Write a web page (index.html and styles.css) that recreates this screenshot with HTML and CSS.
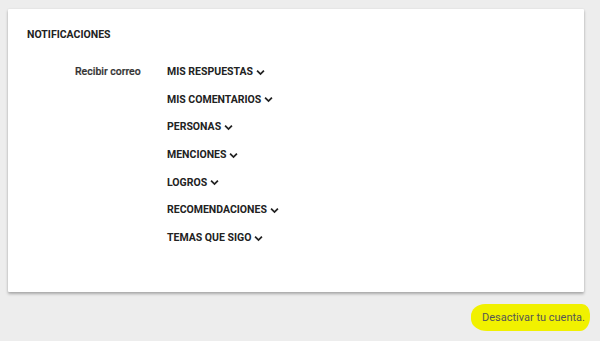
FILE: index.html
```html
<!DOCTYPE html>
<html lang="es">
<head>
<meta charset="utf-8">
<link rel="stylesheet" href="styles.css">
</head>
<body>
<div class="card">
  <h2 class="title">NOTIFICACIONES</h2>
  <div class="row">
    <div class="label">Recibir correo</div>
    <ul class="menu">
      <li>MIS RESPUESTAS <svg class="chev" viewBox="0 0 10 7"><polyline points="1.2,1.5 5,5.2 8.8,1.5"/></svg></li>
      <li>MIS COMENTARIOS <svg class="chev" viewBox="0 0 10 7"><polyline points="1.2,1.5 5,5.2 8.8,1.5"/></svg></li>
      <li>PERSONAS <svg class="chev" viewBox="0 0 10 7"><polyline points="1.2,1.5 5,5.2 8.8,1.5"/></svg></li>
      <li>MENCIONES <svg class="chev" viewBox="0 0 10 7"><polyline points="1.2,1.5 5,5.2 8.8,1.5"/></svg></li>
      <li>LOGROS <svg class="chev" viewBox="0 0 10 7"><polyline points="1.2,1.5 5,5.2 8.8,1.5"/></svg></li>
      <li>RECOMENDACIONES <svg class="chev" viewBox="0 0 10 7"><polyline points="1.2,1.5 5,5.2 8.8,1.5"/></svg></li>
      <li>TEMAS QUE SIGO <svg class="chev" viewBox="0 0 10 7"><polyline points="1.2,1.5 5,5.2 8.8,1.5"/></svg></li>
    </ul>
  </div>
</div>
<div class="footer">
  <span class="deact">Desactivar tu cuenta.</span>
</div>
</body>
</html>
```
FILE: styles.css
```css
html, body {
  margin: 0;
  padding: 0;
}
body {
  background: #ededed;
  font-family: Roboto, "Liberation Sans", sans-serif;
  color: #222;
  width: 600px;
  height: 341px;
  overflow: hidden;
}
.card {
  margin: 9px 16px 0 8px;
  height: 283px;
  background: #fff;
  box-shadow: 0 2px 3px rgba(0,0,0,0.28), 0 0 2px rgba(0,0,0,0.08);
  border-radius: 1px;
  padding: 19px 0 0 19px;
  box-sizing: border-box;
}
.title {
  margin: 0;
  font-size: 10.5px;
  font-weight: 700;
  line-height: 13px;
  color: #222;
}
.row {
  display: flex;
  margin-top: 24px;
}
.label {
  padding-left: 48px;
  width: 140px;
  flex: none;
  box-sizing: border-box;
  font-size: 10.5px;
  font-weight: 500;
  line-height: 13px;
  color: #333;
  -webkit-text-stroke: 0.2px #333;
}
.menu {
  list-style: none;
  margin: 0;
  padding: 0;
  display: flex;
  flex-direction: column;
  gap: 14.7px;
}
.menu li {
  font-size: 10.5px;
  font-weight: 700;
  line-height: 13px;
  color: #222;
  display: flex;
  align-items: center;
  white-space: pre;
}
.chev {
  width: 9px;
  height: 7px;
  margin-top: 1px;
}
.chev polyline {
  fill: none;
  stroke: #222;
  stroke-width: 2;
}
.footer {
  display: flex;
  justify-content: flex-end;
  padding-right: 10px;
  margin-top: 12px;
}
.deact {
  display: inline-block;
  background: #f1f100;
  color: #555;
  font-size: 11px;
  line-height: 13px;
  padding: 7px 5px 7px 11px;
  border-radius: 14px 8px 10px 16px / 12px 10px 14px 12px;
}
```
